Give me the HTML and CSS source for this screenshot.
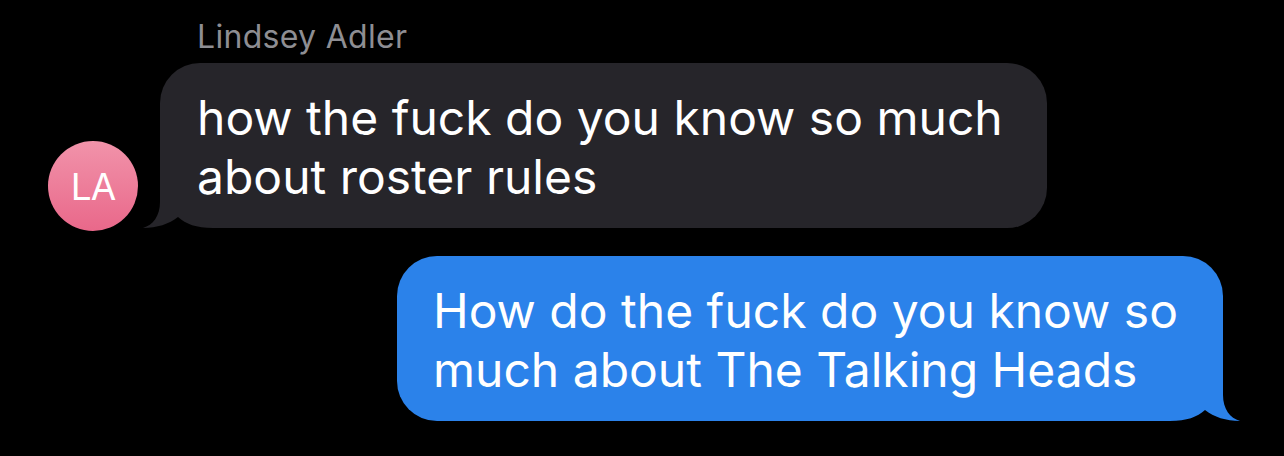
FILE: index.html
```html
<!DOCTYPE html>
<html lang="en">
<head>
  <meta charset="UTF-8">
  <title>Messages</title>
  <link rel="stylesheet" href="styles.css">
</head>
<body>
  <div class="thread">
    <div class="sender">Lindsey Adler</div>
    <div class="row received-row">
      <div class="avatar">LA</div>
      <div class="bubble received">
        <svg class="tail" width="70" height="40" viewBox="0 0 70 40">
          <path class="tail-fill" d="M17 0 L17 14 C17 28 10 37 0 40 L70 40 L70 0 Z"/>
          <path class="tail-cut" d="M0 40 C14 40 26 36 35 29 C43 36 53 40 70 40 Z"/>
        </svg>
        <span class="text">how the fuck do you know so much about roster rules</span>
      </div>
    </div>
    <div class="row sent-row">
      <div class="bubble sent">
        <svg class="tail" width="70" height="40" viewBox="0 0 70 40">
          <path class="tail-fill" d="M17 0 L17 14 C17 28 10 37 0 40 L70 40 L70 0 Z"/>
          <path class="tail-cut" d="M0 40 C14 40 26 36 35 29 C43 36 53 40 70 40 Z"/>
        </svg>
        <span class="text">How do the fuck do you know so much about The Talking Heads</span>
      </div>
    </div>
  </div>
</body>
</html>
```

FILE: styles.css
```css
body {
  margin: 0;
  background: #000;
  font-family: Inter, "Noto Sans", sans-serif;
  color: #fff;
}
.thread {
  display: flex;
  flex-direction: column;
  padding: 19px 61px 0 48px;
}
.sender {
  font-size: 32px;
  line-height: 36px;
  letter-spacing: 0.3px;
  color: #8e8e93;
  margin-left: 149px;
  margin-bottom: 8px;
}
.row {
  display: flex;
  align-items: flex-end;
}
.received-row {
  gap: 22px;
}
.sent-row {
  justify-content: flex-end;
  margin-top: 28px;
}
.avatar {
  position: relative;
  z-index: 1;
  width: 90px;
  height: 90px;
  margin-bottom: -3px;
  border-radius: 50%;
  background: linear-gradient(#f193aa, #e9688a);
  display: flex;
  align-items: center;
  justify-content: center;
  font-size: 37px;
  font-weight: 400;
  letter-spacing: -1px;
}
.bubble {
  position: relative;
  box-sizing: border-box;
  padding: 25px 40px 22px 37px;
  border-radius: 40px;
  font-size: 48px;
  line-height: 59px;
}
.text {
  position: relative;
}
.received {
  width: 887px;
  background: #26252a;
}
.sent {
  width: 826px;
  padding-left: 36px;
  background: #2b82ea;
}
.tail {
  position: absolute;
  bottom: 0;
  display: block;
}
.tail-cut {
  fill: #000;
}
.received .tail {
  left: -17px;
}
.received .tail-fill {
  fill: #26252a;
}
.sent .tail {
  right: -17px;
  transform: scaleX(-1);
}
.sent .tail-fill {
  fill: #2b82ea;
}
```
